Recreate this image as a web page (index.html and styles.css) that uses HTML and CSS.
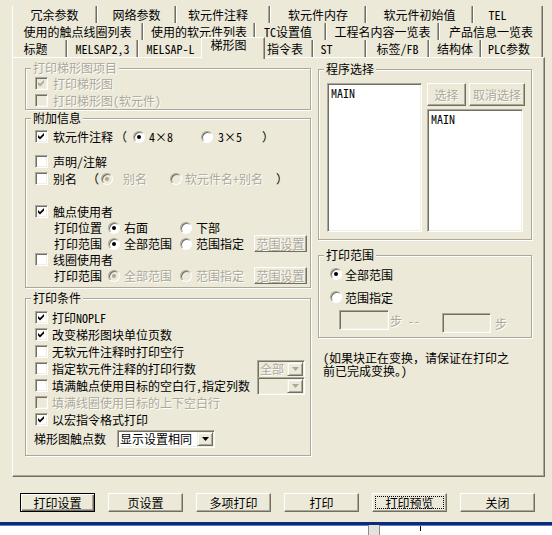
FILE: index.html
```html
<!DOCTYPE html>
<html lang="zh-CN">
<head>
    <meta charset="UTF-8">
    <title>打印</title>
    <link rel="stylesheet" href="styles.css">
</head>
<body>
    <svg class="defs" width="0" height="0">
        <symbol id="chk" viewBox="0 0 11 11"><path d="M2 4 4 6 8 2v2.5L4 8.5 2 6.5z"/></symbol>
        <symbol id="arr" viewBox="0 0 7 4"><path d="M0 0h7L3.5 4z"/></symbol>
    </svg>

    <div class="dialog">
        <div class="tabs">
            <div class="tab-row r1">
                <div class="tab">冗余参数</div>
                <div class="tab">网络参数</div>
                <div class="tab">软元件注释</div>
                <div class="tab">软元件内存</div>
                <div class="tab">软元件初始值</div>
                <div class="tab">TEL</div>
            </div>
            <div class="tab-row r2">
                <div class="tab">使用的触点线圈列表</div>
                <div class="tab">使用的软元件列表</div>
                <div class="tab">TC设置值</div>
                <div class="tab">工程名内容一览表</div>
                <div class="tab">产品信息一览表</div>
            </div>
            <div class="tab-row r3">
                <div class="tab">标题</div>
                <div class="tab">MELSAP2,3</div>
                <div class="tab">MELSAP-L</div>
                <div class="tab sel">梯形图</div>
                <div class="tab">指令表</div>
                <div class="tab">ST</div>
                <div class="tab">标签/FB</div>
                <div class="tab">结构体</div>
                <div class="tab">PLC参数</div>
            </div>
        </div>

        <div class="panel">
            <div class="col-left">
                <fieldset class="group g-items">
                    <legend class="dis">打印梯形图项目</legend>
                    <div class="row"><span class="cb dis"><svg><use href="#chk"/></svg></span><span class="dis">打印梯形图</span></div>
                    <div class="row"><span class="cb dis"></span><span class="dis">打印梯形图(软元件)</span></div>
                </fieldset>

                <fieldset class="group g-info">
                    <legend>附加信息</legend>
                    <div class="row">
                        <span class="cb"><svg><use href="#chk"/></svg></span>软元件注释
                        <span class="ml2">（</span>
                        <span class="rd on ml6"></span><span class="ml4">4×8</span>
                        <span class="rd ml28"></span><span class="ml5">3×5</span>
                        <span class="ml20">）</span>
                    </div>
                    <div class="row mt8"><span class="cb"></span>声明/注解</div>
                    <div class="row">
                        <span class="cb"></span>别名
                        <span class="ml10">（</span>
                        <span class="rd dis on ml2"></span><span class="dis ml10">别名</span>
                        <span class="rd dis ml23"></span><span class="dis ml3">软元件名+别名</span>
                        <span class="ml13">）</span>
                    </div>
                    <div class="row mt16"><span class="cb"><svg><use href="#chk"/></svg></span>触点使用者</div>
                    <div class="sub h15">
                        <span>打印位置</span>
                        <span class="opt"><span class="rd on"></span>右面</span>
                        <span class="opt"><span class="rd"></span>下部</span>
                    </div>
                    <div class="sub">
                        <span>打印范围</span>
                        <span class="opt"><span class="rd on"></span>全部范围</span>
                        <span class="opt"><span class="rd"></span>范围指定</span>
                        <button class="btn dis b-range">范围设置</button>
                    </div>
                    <div class="row h15"><span class="cb"></span>线圈使用者</div>
                    <div class="sub">
                        <span>打印范围</span>
                        <span class="opt dis"><span class="rd dis on"></span>全部范围</span>
                        <span class="opt dis"><span class="rd dis"></span>范围指定</span>
                        <button class="btn dis b-range">范围设置</button>
                    </div>
                </fieldset>

                <fieldset class="group g-cond">
                    <legend>打印条件</legend>
                    <div class="row"><span class="cb"><svg><use href="#chk"/></svg></span>打印NOPLF</div>
                    <div class="row"><span class="cb"><svg><use href="#chk"/></svg></span>改变梯形图块单位页数</div>
                    <div class="row"><span class="cb"></span>无软元件注释时打印空行</div>
                    <div class="row"><span class="cb"></span>指定软元件注释的打印行数
                        <span class="combo dis c-small"><span class="val">全部</span><span class="drop"><svg><use href="#arr"/></svg></span></span>
                    </div>
                    <div class="row"><span class="cb"></span>填满触点使用目标的空白行,指定列数
                        <span class="combo dis c-small"><span class="val"></span><span class="drop"><svg><use href="#arr"/></svg></span></span>
                    </div>
                    <div class="row"><span class="cb dis"></span><span class="dis">填满线圈使用目标的上下空白行</span></div>
                    <div class="row"><span class="cb"><svg><use href="#chk"/></svg></span>以宏指令格式打印</div>
                    <div class="row-combo">梯形图触点数
                        <span class="combo c-wide"><span class="val">显示设置相同</span><span class="drop"><svg><use href="#arr"/></svg></span></span>
                    </div>
                </fieldset>
            </div>

            <div class="col-right">
                <fieldset class="group g-prog">
                    <legend>程序选择</legend>
                    <div class="prog">
                        <div class="list list-l">MAIN</div>
                        <div class="prog-side">
                            <div class="prog-btns">
                                <button class="btn dis b-sel">选择</button>
                                <button class="btn dis b-unsel">取消选择</button>
                            </div>
                            <div class="list list-r">MAIN</div>
                        </div>
                    </div>
                </fieldset>

                <fieldset class="group g-range">
                    <legend>打印范围</legend>
                    <div class="row"><span class="rd on"></span>全部范围</div>
                    <div class="row mt7"><span class="rd"></span>范围指定</div>
                    <div class="steps">
                        <div class="step"><span class="field"></span><span class="dis">步 --</span></div>
                        <div class="step step-b"><span class="field"></span><span class="dis">步</span></div>
                    </div>
                </fieldset>

                <p class="note">(如果块正在变换，请保证在打印之<br>前已完成变换。)</p>
            </div>
        </div>

        <div class="btnbar">
            <button class="btn def">打印设置</button>
            <button class="btn">页设置</button>
            <button class="btn">多项打印</button>
            <button class="btn">打印</button>
            <button class="btn"><span class="focus">打印预览</span></button>
            <button class="btn">关闭</button>
        </div>
    </div>

    <div class="desk">
        <span class="grip"></span>
        <span class="tick"></span>
    </div>
</body>
</html>
```

FILE: styles.css
```css
* {
    box-sizing: border-box;
}

body {
    margin: 0;
    width: 552px;
    height: 535px;
    overflow: hidden;
    background: #fff;
    font-family: "Noto Sans Mono CJK SC", "Noto Sans CJK SC", sans-serif;
    font-size: 12px;
    line-height: 13px;
    color: #000;
}

.defs {
    position: absolute;
}

.dialog {
    height: 522px;
    background: #ece9d8;
}

.dis {
    color: #aca899;
    text-shadow: 1px 1px 0 #fff;
}

/* tabs */
.tabs {
    padding: 6px 0 0 12px;
}

.tab-row {
    display: flex;
    height: 17px;
}

.tab {
    flex: none;
    display: flex;
    align-items: center;
    justify-content: center;
    height: 17px;
    white-space: nowrap;
    border-left: 1px solid #fff;
    border-right: 1px solid #716f64;
    box-shadow: inset -1px 0 #aca899;
}

.r1 .tab:nth-child(1) { width: 85px; }
.r1 .tab:nth-child(2) { width: 79px; }
.r1 .tab:nth-child(3) { width: 94px; padding-right: 10px; }
.r1 .tab:nth-child(4) { width: 96px; }
.r1 .tab:nth-child(5) { width: 107px; }
.r1 .tab:nth-child(6) { width: 70px; padding-right: 21px; }

.r2 .tab:nth-child(1) { width: 131px; }
.r2 .tab:nth-child(2) { width: 112px; }
.r2 .tab:nth-child(3) { width: 71px; padding-right: 5px; }
.r2 .tab:nth-child(4) { width: 113px; }
.r2 .tab:nth-child(5) { width: 104px; }

.r3 .tab:nth-child(1) { width: 55px; padding-right: 8px; }
.r3 .tab:nth-child(2) { width: 71px; }
.r3 .tab:nth-child(3) { width: 65px; }
.r3 .tab:nth-child(4) { width: 64px; padding-right: 9px; }
.r3 .tab:nth-child(5) { width: 50px; padding-right: 6px; }
.r3 .tab:nth-child(6) { width: 53px; padding-right: 26px; }
.r3 .tab:nth-child(7) { width: 63px; }
.r3 .tab:nth-child(8) { width: 52px; }
.r3 .tab:nth-child(9) { width: 62px; padding-right: 6px; }

.tab.sel {
    position: relative; /* sits over the panel's top edge */
    z-index: 1;
    align-items: flex-start;
    height: 22px;
    margin: -3px -2px -2px;
    border-top: 1px solid #fff;
    background: #ece9d8;
}

/* page panel */
.panel {
    display: flex;
    gap: 7px;
    width: 533px;
    height: 420px;
    margin-left: 12px;
    padding: 3px 0 0 12px;
    border: 1px solid;
    border-color: #fff #716f64 #716f64 #fff;
    box-shadow: inset -1px -1px #aca899;
}

.col-left {
    width: 286px;
}

.col-right {
    width: 214px;
}

.group {
    margin: 0;
    padding: 0 5px;
    min-width: 0;
    border: 1px solid #aca899;
    box-shadow: inset 1px 1px #fff, 1px 1px #fff;
}

.group legend {
    height: 14px;
    padding: 0 2px;
    line-height: 14px;
    background: #ece9d8;
}

.g-info {
    margin-top: 1px;
    padding-top: 3px;
    padding-bottom: 3px;
}

.g-cond {
    margin-top: 3px;
    padding-top: 4px;
    padding-bottom: 6px;
}

.g-prog {
    margin-top: 1px;
}

.g-range {
    margin-top: 8px;
    padding-top: 4px;
    padding-bottom: 4px;
}

.row {
    display: flex;
    align-items: center;
    height: 17px;
    padding-left: 4px;
    white-space: nowrap;
}

.g-range .row {
    height: 16px;
    padding-left: 6px;
}

.sub {
    display: grid;
    grid-template-columns: 54px 72px 74px 53px;
    align-items: center;
    height: 17px;
    padding-left: 23px;
    white-space: nowrap;
}

.opt {
    display: flex;
    align-items: center;
    gap: 4px;
}

.h15 { height: 15px; }
.mt7 { margin-top: 7px; }
.mt8 { margin-top: 8px; }
.mt16 { margin-top: 16px; }
.ml2 { margin-left: 2px; }
.ml3 { margin-left: 3px; }
.ml4 { margin-left: 4px; }
.ml5 { margin-left: 5px; }
.ml6 { margin-left: 6px; }
.ml10 { margin-left: 10px; }
.ml13 { margin-left: 13px; }
.ml20 { margin-left: 20px; }
.ml23 { margin-left: 23px; }
.ml28 { margin-left: 28px; }

/* checkbox and radio */
.cb {
    flex: none;
    width: 13px;
    height: 13px;
    margin-right: 5px;
    background: #fff;
    border: 1px solid;
    border-color: #aca899 #fff #fff #aca899;
    box-shadow: inset 1px 1px #716f64, inset -1px -1px #f1efe2;
}

.g-cond .cb {
    margin-right: 4px;
}

.cb svg {
    display: block;
    width: 11px;
    height: 11px;
    fill: #000;
}

.cb.dis {
    background: #ece9d8;
}

.cb.dis svg {
    fill: #aca899;
}

.rd {
    flex: none;
    display: flex;
    align-items: center;
    justify-content: center;
    width: 12px;
    height: 12px;
    border-radius: 50%;
    background: #fff;
    border: 1px solid;
    border-color: #aca899 #fff #fff #aca899;
    box-shadow: inset 1px 1px #716f64;
}

.g-range .rd {
    margin-right: 3px;
}

.rd.on::after {
    content: "";
    width: 4px;
    height: 4px;
    border-radius: 50%;
    background: #000;
}

.rd.dis {
    background: #ece9d8;
}

.rd.dis.on::after {
    background: #aca899;
}

/* buttons */
.btn {
    display: flex;
    align-items: center;
    justify-content: center;
    height: 17px;
    padding: 0;
    font: inherit;
    color: #000;
    white-space: nowrap;
    background: #ece9d8;
    border: 1px solid;
    border-color: #fff #716f64 #716f64 #fff;
    box-shadow: inset -1px -1px #aca899;
}

.btn.dis {
    color: #aca899;
    text-shadow: 1px 1px 0 #fff;
}

.b-range {
    width: 53px;
}

.b-sel {
    width: 39px;
    height: 23px;
}

.b-unsel {
    width: 56px;
    height: 23px;
}

/* combo boxes */
.combo {
    display: flex;
    align-items: center;
    height: 18px;
    padding: 1px;
    background: #fff;
    border: 1px solid;
    border-color: #aca899 #fff #fff #aca899;
    box-shadow: inset 1px 1px #716f64, inset -1px -1px #f1efe2;
}

.combo.dis {
    background: #ece9d8;
}

.c-small {
    width: 48px;
    margin-left: auto;
}

.c-wide {
    width: 98px;
    margin-left: 11px;
}

.combo .val {
    flex: 1;
    padding-left: 1px;
}

.combo .drop {
    display: flex;
    align-items: center;
    justify-content: center;
    width: 16px;
    height: 14px;
    background: #ece9d8;
    border: 1px solid;
    border-color: #f1efe2 #716f64 #716f64 #f1efe2;
    box-shadow: inset 1px 1px #fff, inset -1px -1px #aca899;
}

.drop svg {
    width: 7px;
    height: 4px;
    fill: #000;
}

.combo.dis .drop svg {
    fill: #aca899;
}

.row-combo {
    display: flex;
    align-items: center;
    height: 21px;
    padding-left: 3px;
}

/* program list */
.prog {
    display: flex;
    gap: 5px;
    padding: 7px 0 7px 3px;
}

.prog-side {
    display: flex;
    flex-direction: column;
    gap: 3px;
}

.prog-btns {
    display: flex;
    gap: 3px;
}

.list {
    padding: 2px 3px;
    background: #fff;
    border: 1px solid;
    border-color: #aca899 #fff #fff #aca899;
    box-shadow: inset 1px 1px #716f64, inset -1px -1px #f1efe2;
}

.list-l {
    width: 95px;
    height: 149px;
}

.list-r {
    width: 96px;
    height: 123px;
}

.steps {
    display: flex;
    align-items: flex-start;
    height: 23px;
    margin-top: 5px;
}

.step {
    display: flex;
    align-items: center;
}

.step:first-child {
    margin-left: 15px;
}

.step-b {
    margin-top: 3px;
    margin-left: 22px;
}

.field {
    width: 50px;
    height: 20px;
    margin-right: 1px;
    border: 1px solid;
    border-color: #aca899 #fff #fff #aca899;
    box-shadow: inset 1px 1px #716f64, inset -1px -1px #f1efe2;
}

.step-b .field {
    width: 49px;
    margin-right: 4px;
}

.note {
    margin: 13px 0 0 5px;
}

/* bottom buttons */
.btnbar {
    display: flex;
    gap: 13px;
    margin: 16px 0 0 20px;
}

.btnbar .btn {
    width: 75px;
    height: 19px;
}

.btn.def {
    border-color: #000;
    box-shadow: inset 1px 1px #fff, inset -1px -1px #716f64, inset -2px -2px #aca899;
}

.focus {
    display: block;
    width: 69px;
    height: 13px;
    line-height: 11px;
    border: 1px dotted #000;
}

/* window behind the dialog */
.desk {
    display: flex;
    height: 13px;
    background: #fff;
    border-top: 3px solid #0c2a78;
    box-shadow: inset 0 1px #5b7bc4;
}

.grip {
    width: 12px;
    height: 10px;
    margin-left: 368px;
    background: #e4e2da;
    border-left: 1px solid #8c8c8c;
    border-right: 1px solid #8c8c8c;
}

.tick {
    width: 1px;
    height: 5px;
    margin: 1px 0 0 40px;
    background: #000;
}
```
